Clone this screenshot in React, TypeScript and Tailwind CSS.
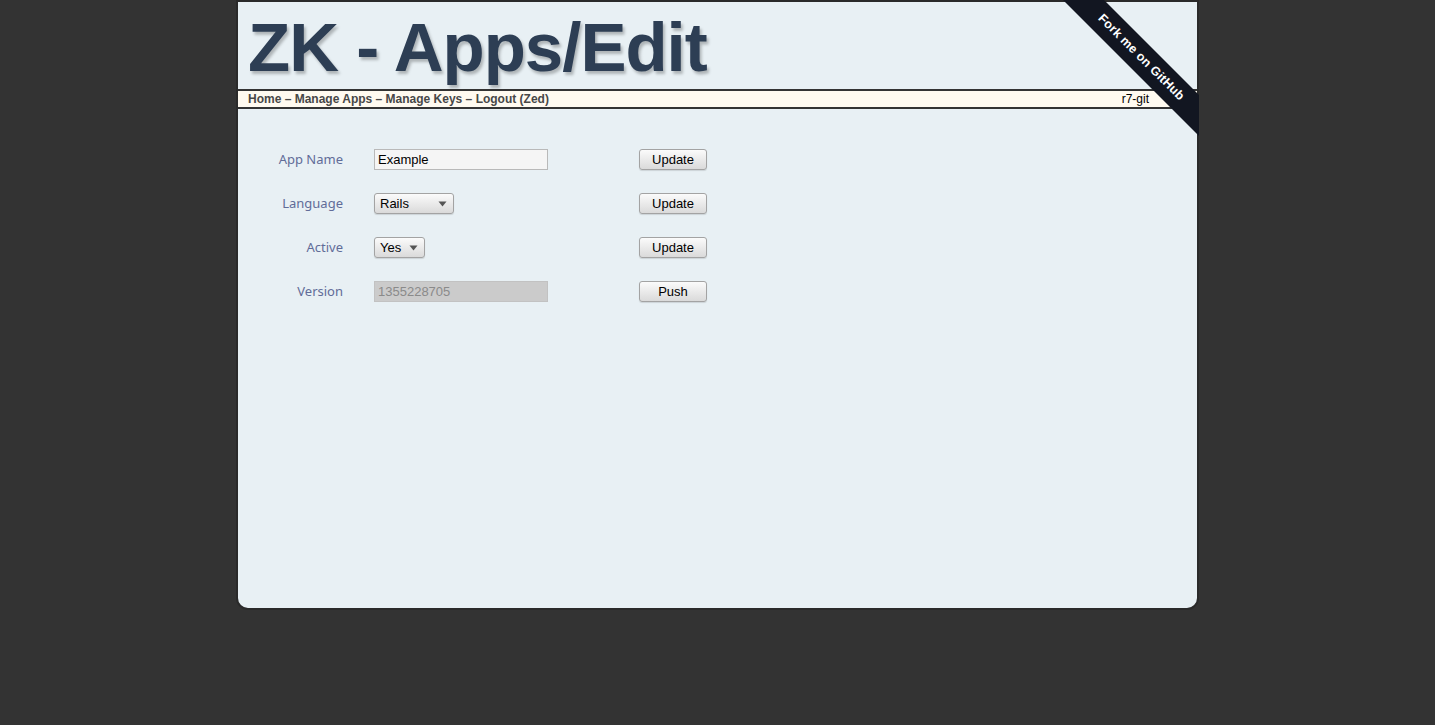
import { ReactNode } from "react";

const rows = [
  { label: "App Name", kind: "text", value: "Example", action: "Update" },
  { label: "Language", kind: "select", value: "Rails", width: "w-[80px]", action: "Update" },
  { label: "Active", kind: "select", value: "Yes", width: "w-[51px]", action: "Update" },
  { label: "Version", kind: "disabled", value: "1355228705", action: "Push" },
];

function Caret() {
  return (
    <svg width="9" height="6" viewBox="0 0 9 6" className="shrink-0">
      <path d="M0.5 0.5h8L4.5 5.5z" fill="#555" />
    </svg>
  );
}

function FakeSelect({ value, width }: { value: string; width?: string }) {
  return (
    <div
      className={`flex h-[21px] ${width} items-center justify-between rounded-[3px] border border-[#a3a3a3] bg-gradient-to-b from-[#fbfbfb] to-[#dadada] pl-[5px] pr-[6px] text-[13px] text-black shadow-[0_1px_1px_rgba(0,0,0,0.12)]`}
    >
      <span>{value}</span>
      <Caret />
    </div>
  );
}

function Btn({ children }: { children: ReactNode }) {
  return (
    <button className="flex h-[21px] w-[68px] items-center justify-center rounded-[3px] border border-[#a3a3a3] bg-gradient-to-b from-[#fbfbfb] to-[#dadada] text-[13px] text-black shadow-[0_1px_1px_rgba(0,0,0,0.12)]">
      {children}
    </button>
  );
}

function Ribbon() {
  return (
    <div className="pointer-events-none absolute right-0 top-0 z-10 h-[149px] w-[149px] overflow-hidden">
      <div className="absolute left-[-19px] top-[43px] flex h-[29px] w-[220px] rotate-45 items-center justify-center bg-[#121621] text-[12.5px] font-bold tracking-[0.2px] text-white">
        Fork me on GitHub
      </div>
    </div>
  );
}

export default function App() {
  return (
    <div className="min-h-[725px] bg-[#333333] font-['Liberation_Sans',Arial,sans-serif]">
      <div className="relative mx-auto w-[963px]">
        <div className="h-[610px] overflow-hidden rounded-b-[12px] border-2 border-[#2a2a2a] bg-[#e8f0f4]">
          <header className="h-[87px] pl-[10px] pt-[11px]">
            <h1 className="text-[69px] font-bold leading-none tracking-[-1px] text-[#2d3e54] [text-shadow:2px_3px_3px_rgba(0,0,0,0.25)]">
              ZK - Apps/Edit
            </h1>
          </header>
          <nav className="flex h-[20px] items-center justify-between border-y-2 border-[#333] bg-[#fffaf0] pl-[10px] pr-[48px] text-[12px]">
            <span className="font-bold text-[#474747]">
              Home – Manage Apps – Manage Keys – Logout (Zed)
            </span>
            <span className="text-black">r7-git</span>
          </nav>
          <main className="flex flex-col gap-[23px] pt-[40px]">
            {rows.map((r) => (
              <div key={r.label} className="flex h-[21px] items-center">
                <div className="w-[105px] text-right font-['Noto_Sans',sans-serif] text-[13px] text-[#616c98]">
                  {r.label}
                </div>
                <div className="ml-[31px] w-[265px]">
                  {r.kind === "text" && (
                    <div className="flex h-[21px] w-[174px] items-center border border-[#b9b9b9] bg-[#f5f5f5] pl-[3px] text-[13px] text-black">
                      {r.value}
                    </div>
                  )}
                  {r.kind === "disabled" && (
                    <div className="flex h-[21px] w-[174px] items-center border border-[#c2c2c2] bg-[#cbcbcb] pl-[3px] text-[13px] text-[#8a8a8a]">
                      {r.value}
                    </div>
                  )}
                  {r.kind === "select" && <FakeSelect value={r.value} width={r.width} />}
                </div>
                <Btn>{r.action}</Btn>
              </div>
            ))}
          </main>
        </div>
        <Ribbon />
      </div>
    </div>
  );
}
